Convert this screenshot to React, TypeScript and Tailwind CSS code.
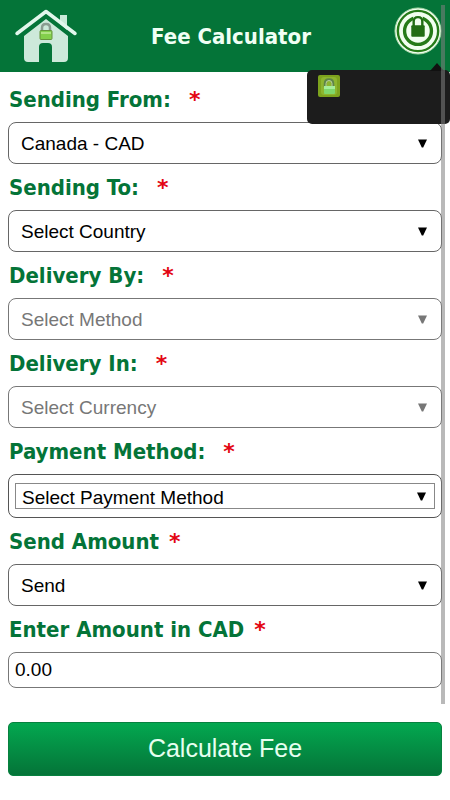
import { useId, useState } from "react";

type FieldProps = {
  label: string;
  option: string;
  disabled?: boolean;
  framed?: boolean;
  spaced?: boolean;
};

function Caption({ id, text, spaced }: { id: string; text: string; spaced?: boolean }) {
  return (
    <label
      htmlFor={id}
      className="flex h-[46px] items-center pl-px font-['DejaVu_Sans_Condensed','Noto_Sans',sans-serif] text-[22px] font-bold whitespace-pre text-[#047438]"
    >
      {text}
      <span className={spaced ? "ml-[18px] font-['DejaVu_Sans',sans-serif] text-[#e30613]" : "ml-[10px] font-['DejaVu_Sans',sans-serif] text-[#e30613]"}>*</span>
    </label>
  );
}

function Arrow({ framed }: { framed?: boolean }) {
  return (
    <svg
      viewBox="0 0 9 9"
      className={framed ? "pointer-events-none absolute right-2 h-[9px] w-[9px]" : "pointer-events-none absolute right-[14px] h-[9px] w-[9px]"}
      fill="currentColor"
      aria-hidden="true"
    >
      <path d="M0 0.5H9L5.2 8.5H3.8Z" />
    </svg>
  );
}

function SelectField({ label, option, disabled, framed, spaced }: FieldProps) {
  const id = useId();
  return (
    <div>
      <Caption id={id} text={label} spaced={spaced} />
      <div
        className={
          framed
            ? "h-11 rounded-lg border border-[#555] bg-white px-[6px] py-2 text-black"
            : disabled
              ? "h-[42px] rounded-lg border border-[#777] bg-white text-[#777]"
              : "h-[42px] rounded-lg border border-[#666] bg-white text-black"
        }
      >
        <div className={framed ? "relative flex h-full items-center border border-[#888]" : "relative flex h-full items-center"}>
          <select
            id={id}
            disabled={disabled}
            className={
              framed
                ? "h-full w-full appearance-none bg-transparent px-[6px] pt-[2px] text-[19px] leading-6 opacity-100"
                : "h-full w-full appearance-none rounded-lg bg-transparent px-3 pt-[2px] text-[19px] leading-6 opacity-100"
            }
          >
            <option>{option}</option>
          </select>
          <Arrow framed={framed} />
        </div>
      </div>
    </div>
  );
}

function HomeIcon() {
  return (
    <svg viewBox="0 0 64 56" className="h-14 w-16" aria-hidden="true">
      <path d="M46 7h7v15l-7-6z" fill="#c9ead8" />
      <path d="M3 25.500 32 3.500 61 25.500" fill="none" stroke="#e2f7ec" strokeWidth="3.500" strokeLinecap="round" strokeLinejoin="round" />
      <path d="M32 11 54 28v22q0 4-4 4H38V39q0-4-4-4h-5q-4 0-4 4v15H14q-4 0-4-4V28Z" fill="#cde9da" />
      <path d="M28 23v-3q0-4 4-4t4 4v3" fill="none" stroke="#8b9c91" strokeWidth="2.500" />
      <rect x="26" y="22.500" width="12" height="9" rx="1" fill="#83cf4b" stroke="#65943d" />
      <path d="M27 24h10v2H27z" fill="#b0e484" />
    </svg>
  );
}

function SecureIcon() {
  return (
    <svg viewBox="0 0 50 50" className="h-12 w-12" aria-hidden="true">
      <circle cx="25" cy="25" r="24" fill="#f2fff0" stroke="#a9d9a8" />
      <circle cx="25" cy="25" r="21" fill="none" stroke="#267b18" strokeWidth="2.500" />
      <circle cx="25" cy="25" r="14" fill="none" stroke="#267b18" strokeWidth="3.500" />
      <path d="M20 7h10v14H20z" fill="#f2fff0" />
      <path d="M20.500 21v-6q0-4.500 4.500-4.500t4.500 4.500v6" fill="none" stroke="#226e14" strokeWidth="2.500" />
      <rect x="18" y="19" width="14" height="12" rx="1" fill="#226e14" />
    </svg>
  );
}

function LockBadge() {
  return (
    <svg viewBox="0 0 22 22" className="h-[22px] w-[22px]" aria-hidden="true">
      <rect width="22" height="22" rx="2" fill="#7da31d" />
      <rect x="3" y="2" width="16" height="18" rx="3" fill="#8db52f" />
      <path d="M7 12V8.500q0-4 4-4t4 4V12" fill="none" stroke="#5e8547" strokeWidth="2.500" />
      <path d="M8 12V8.500q0-3 3-3t3 3V12" fill="none" stroke="#b9cfa0" />
      <rect x="6" y="11" width="11" height="8" rx="1" fill="#7fd86c" />
      <path d="M6 11h11v3H6z" fill="#a7ee9b" />
    </svg>
  );
}

export default function App() {
  const [amount, setAmount] = useState("0.00");
  return (
    <div className="relative min-h-screen overflow-hidden bg-white font-['Liberation_Sans',Arial,sans-serif]">
      <header className="relative flex h-[72px] items-center justify-between bg-[#047438] pr-2 pl-[14px]">
        <button type="button" aria-label="Home">
          <HomeIcon />
        </button>
        <h1 className="pr-[10px] font-['DejaVu_Sans_Condensed','Noto_Sans',sans-serif] text-[22px] font-bold text-[#f0fff4]">
          Fee Calculator
        </h1>
        <button type="button" aria-label="Security" className="pb-[10px]">
          <SecureIcon />
        </button>
        <div className="absolute top-[70px] right-0 z-10 h-[54px] w-[143px] rounded-[5px] bg-[#1c1c1c] px-[11px] py-[5px]">
          <svg viewBox="0 0 14 8" className="absolute -top-[7px] right-[6px] h-2 w-[14px]" aria-hidden="true">
            <path d="M0 8 7 0l7 8z" fill="#111" />
          </svg>
          <LockBadge />
        </div>
      </header>

      <form className="px-2 pt-1" onSubmit={(e) => e.preventDefault()}>
        <SelectField label="Sending From:" option="Canada - CAD" spaced />
        <SelectField label="Sending To:" option="Select Country" spaced />
        <SelectField label="Delivery By:" option="Select Method" disabled spaced />
        <SelectField label="Delivery In:" option="Select Currency" disabled spaced />
        <SelectField label="Payment Method:" option="Select Payment Method" framed spaced />
        <SelectField label="Send Amount" option="Send" />
        <Caption id="amount" text="Enter Amount in CAD" />
        <input
          id="amount"
          type="text"
          inputMode="decimal"
          value={amount}
          onChange={(e) => setAmount(e.target.value)}
          className="block h-9 w-full rounded-lg border border-[#777] bg-white px-[6px] text-[19px] text-black"
        />
        <button
          type="submit"
          className="mt-[34px] mb-6 h-[54px] w-full rounded-[5px] border border-[#07813f] bg-linear-to-b from-[#03a850] to-[#047438] text-[25px] text-[#e6fff0]"
        >
          Calculate Fee
        </button>
      </form>

      <div className="pointer-events-none absolute top-[5px] right-[5px] z-20 h-[699px] w-1 bg-[#808080]/55" />
    </div>
  );
}
